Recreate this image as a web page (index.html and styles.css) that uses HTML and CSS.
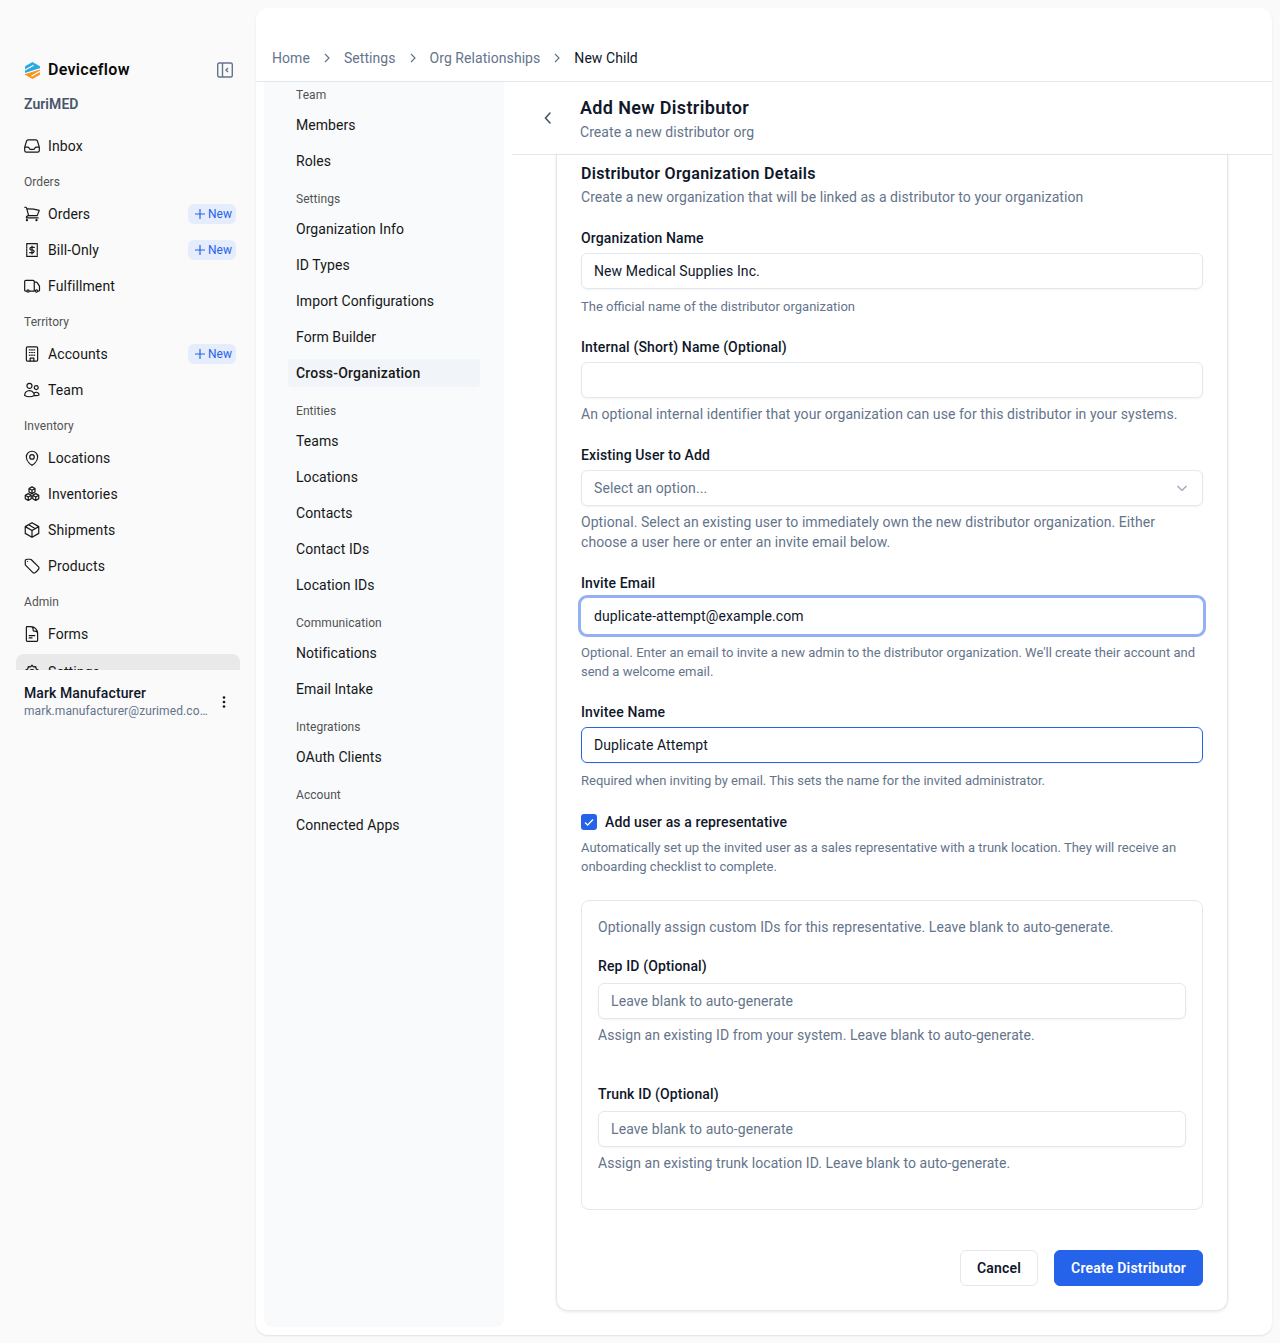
FILE: index.html

```html
<!DOCTYPE html>
<html lang="en">
<head>
    <meta charset="UTF-8">
    <title>Add New Distributor</title>
    <link rel="stylesheet" href="styles.css">
</head>
<body>
    <aside class="sidebar">
        <div class="brand">
            <svg class="logo" viewBox="1 0 14 16">
                <path d="M8 0 15 4v3.500L1 11V4z" fill="#29abe2"/>
                <path d="M15 6.500V12l-7 4-7-4V10.500z" fill="#f7941d"/>
                <path d="M1 7.600 9 3M1 10.800 15 6.400M7 13.400l8-4.600" stroke="#fff" stroke-width="1.100" fill="none"/>
            </svg>
            <span class="brand-name">Deviceflow</span>
            <svg class="collapse" viewBox="0 0 16 16" fill="none" stroke="#64748b" stroke-width="1.400">
                <rect x="0.700" y="1" width="14.600" height="14" rx="1.500"/>
                <path d="M5.500 1v14M11 6 9 8l2 2"/>
            </svg>
        </div>
        <div class="org-name">ZuriMED</div>
        <nav class="nav">
            <a class="nav-item"><svg class="ico" viewBox="0 0 24 24"><path d="M2.250 13.500h3.860a2.250 2.250 0 0 1 2.010 1.240l.26.52a2.250 2.250 0 0 0 2.010 1.240h3.220a2.250 2.250 0 0 0 2.010-1.240l.26-.52a2.250 2.250 0 0 1 2.010-1.240h3.860M2.250 13.900V18a2.250 2.250 0 0 0 2.250 2.250h15A2.250 2.250 0 0 0 21.750 18v-4.100a2.250 2.250 0 0 0-.1-.66L19.240 5.400a2.250 2.250 0 0 0-2.150-1.590H6.910A2.250 2.250 0 0 0 4.760 5.400L2.350 13.240a2.250 2.250 0 0 0-.1.66Z"/></svg>Inbox</a>
            <div class="nav-label">Orders</div>
            <a class="nav-item"><svg class="ico" viewBox="0 0 24 24"><path d="M2.250 3h1.390c.51 0 .95.34 1.090.83l.38 1.440M7.500 14.250a3 3 0 0 0-3 3h15.750m-12.750-3h11.220c1.120-2.300 2.100-4.680 2.920-7.130A60 60 0 0 0 5.110 5.270M7.500 14.250 5.110 5.270M6 20.250a.75.75 0 1 1-1.500 0 .75.75 0 0 1 1.500 0Zm12.750 0a.75.75 0 1 1-1.500 0 .75.75 0 0 1 1.500 0Z"/></svg>Orders<span class="new-tag"><svg viewBox="0 0 10 10"><path d="M5 0v10M0 5h10"/></svg>New</span></a>
            <a class="nav-item"><svg class="ico" viewBox="0 0 24 24"><path d="M5 3.500h14v17H5z" stroke-dasharray="2.200 1.100"/><path d="M15 8.500h-4a1.750 1.750 0 0 0 0 3.500h2a1.750 1.750 0 0 1 0 3.500H9M12 6.800v10.400"/></svg>Bill-Only<span class="new-tag"><svg viewBox="0 0 10 10"><path d="M5 0v10M0 5h10"/></svg>New</span></a>
            <a class="nav-item"><svg class="ico" viewBox="0 0 24 24"><path d="M8.250 18.750a1.500 1.500 0 0 1-3 0m3 0a1.500 1.500 0 0 0-3 0m3 0h6m-9 0H3.380A1.130 1.130 0 0 1 2.250 17.600V6a1.500 1.500 0 0 1 1.500-1.500h9.750A1.500 1.500 0 0 1 15 6v12.750m0 0h-.75m.75-12h2.600a1.500 1.500 0 0 1 1.250.67l2.900 4.400c.17.25.25.54.25.83v4.950c0 .62-.5 1.130-1.130 1.130H19.500m0 0a1.500 1.500 0 0 1-3 0m3 0a1.500 1.500 0 0 0-3 0"/></svg>Fulfillment</a>
            <div class="nav-label">Territory</div>
            <a class="nav-item"><svg class="ico" viewBox="0 0 24 24"><rect x="4.500" y="2.500" width="15" height="19" rx="1.500"/><path d="M9.500 21.500v-4h5v4M8.500 6.500h1M11.500 6.500h1M14.500 6.500h1M8.500 10h1M11.500 10h1M14.500 10h1M8.500 13.500h1M11.500 13.500h1M14.500 13.500h1"/></svg>Accounts<span class="new-tag"><svg viewBox="0 0 10 10"><path d="M5 0v10M0 5h10"/></svg>New</span></a>
            <a class="nav-item"><svg class="ico" viewBox="0 0 24 24"><path d="M15 19.130a9.400 9.400 0 0 0 2.630.37c1.330 0 2.600-.28 3.740-.78.03-1.960-1.550-3.720-3.750-3.720-1 0-1.920.37-2.600.98M15 19.130v-.01c0-1.110-.29-2.160-.78-3.070M15 19.240A12.300 12.300 0 0 1 8.630 21c-2.330 0-4.510-.64-6.370-1.760v-.12a6.380 6.380 0 0 1 11.960-3.070M12 6.380a3.380 3.380 0 1 1-6.750 0 3.380 3.380 0 0 1 6.750 0Zm8.250 2.250a2.630 2.630 0 1 1-5.250 0 2.630 2.630 0 0 1 5.250 0Z"/></svg>Team</a>
            <div class="nav-label">Inventory</div>
            <a class="nav-item"><svg class="ico" viewBox="0 0 24 24"><circle cx="12" cy="10.500" r="3"/><path d="M19.500 10.500c0 7.140-7.500 11.250-7.500 11.250S4.500 17.640 4.500 10.500a7.500 7.500 0 1 1 15 0Z"/></svg>Locations</a>
            <a class="nav-item"><svg class="ico" viewBox="0 0 24 24"><path d="m12 2.500 4 2.200v4.600l-4 2.200-4-2.200V4.700zM7 11.500l4 2.200v4.600l-4 2.200-4-2.200v-4.600zM17 11.500l4 2.200v4.600l-4 2.200-4-2.200v-4.600zM8 4.700l4 2.300 4-2.300M12 7v4.500M3 13.700l4 2.300 4-2.300M7 16v4.500M13 13.700l4 2.300 4-2.300M17 16v4.500"/></svg>Inventories</a>
            <a class="nav-item"><svg class="ico" viewBox="0 0 24 24"><path d="m21 7.500-9-5.250L3 7.500m18 0-9 5.250m9-5.250v9L12 21.750M3 7.500l9 5.250M3 7.500v9l9 5.250m0-9v9M7.500 5 16.500 10.200"/></svg>Shipments</a>
            <a class="nav-item"><svg class="ico" viewBox="0 0 24 24"><path d="M9.570 3H5.250A2.250 2.250 0 0 0 3 5.250v4.320c0 .6.24 1.170.66 1.600l9.580 9.580c.7.7 1.780.87 2.610.33a18.100 18.100 0 0 0 5.220-5.220c.54-.83.37-1.900-.33-2.600l-9.580-9.600A2.250 2.250 0 0 0 9.570 3Z"/><path d="M6 6h.01"/></svg>Products</a>
            <div class="nav-label">Admin</div>
            <a class="nav-item"><svg class="ico" viewBox="0 0 24 24"><path d="M19.500 14.250v-2.630a3.380 3.380 0 0 0-3.380-3.370h-1.500A1.130 1.130 0 0 1 13.500 7.130v-1.500A3.380 3.380 0 0 0 10.130 2.250H8.250m0 12h7.500m-7.500 3H12M10.500 2.250H5.630c-.62 0-1.130.5-1.130 1.130v17.250c0 .62.5 1.130 1.130 1.130h12.750c.62 0 1.130-.5 1.130-1.130V11.250a9 9 0 0 0-9-9Z"/></svg>Forms</a>
            <a class="nav-item nav-item-active"><svg class="ico" viewBox="0 0 24 24"><circle cx="12" cy="12" r="3.200"/><path d="m12 3 2 2.200 3-.3.6 3 2.600 1.600-1.300 2.500 1.300 2.500-2.600 1.600-.6 3-3-.3-2 2.200-2-2.200-3 .3-.6-3-2.600-1.600L5.100 12 3.800 9.500l2.600-1.600.6-3 3 .3z"/></svg>Settings</a>
        </nav>
        <div class="user">
            <div class="user-text">
                <div class="user-name">Mark Manufacturer</div>
                <div class="user-mail">mark.manufacturer@zurimed.com</div>
            </div>
            <svg class="dots" viewBox="0 0 16 16" fill="#0f172a"><circle cx="8" cy="3.500" r="1.300"/><circle cx="8" cy="8" r="1.300"/><circle cx="8" cy="12.500" r="1.300"/></svg>
        </div>
    </aside>

    <main class="main">
        <header class="crumbs">
            <a>Home</a>
            <svg class="crumb-sep" viewBox="0 0 16 16"><path d="m6 4 4 4-4 4"/></svg>
            <a>Settings</a>
            <svg class="crumb-sep" viewBox="0 0 16 16"><path d="m6 4 4 4-4 4"/></svg>
            <a>Org Relationships</a>
            <svg class="crumb-sep" viewBox="0 0 16 16"><path d="m6 4 4 4-4 4"/></svg>
            <span class="crumb-current">New Child</span>
        </header>

        <div class="main-body">
            <div class="subnav">
                <div class="subnav-label">Team</div>
                <a class="subnav-item">Members</a>
                <a class="subnav-item">Roles</a>
                <div class="subnav-label">Settings</div>
                <a class="subnav-item">Organization Info</a>
                <a class="subnav-item">ID Types</a>
                <a class="subnav-item">Import Configurations</a>
                <a class="subnav-item">Form Builder</a>
                <a class="subnav-item subnav-active">Cross-Organization</a>
                <div class="subnav-label">Entities</div>
                <a class="subnav-item">Teams</a>
                <a class="subnav-item">Locations</a>
                <a class="subnav-item">Contacts</a>
                <a class="subnav-item">Contact IDs</a>
                <a class="subnav-item">Location IDs</a>
                <div class="subnav-label">Communication</div>
                <a class="subnav-item">Notifications</a>
                <a class="subnav-item">Email Intake</a>
                <div class="subnav-label">Integrations</div>
                <a class="subnav-item">OAuth Clients</a>
                <div class="subnav-label">Account</div>
                <a class="subnav-item">Connected Apps</a>
            </div>

            <section class="content">
                <div class="page-head">
                    <svg class="back" viewBox="0 0 16 16"><path d="M10 3 5.500 8l4.500 5"/></svg>
                    <div>
                        <h1>Add New Distributor</h1>
                        <p>Create a new distributor org</p>
                    </div>
                </div>

                <div class="scroll">
                    <form class="card">
                        <h2>Distributor Organization Details</h2>
                        <p class="card-sub">Create a new organization that will be linked as a distributor to your organization</p>

                        <label class="lbl">Organization Name</label>
                        <div class="input">New Medical Supplies Inc.</div>
                        <p class="hint-sm">The official name of the distributor organization</p>

                        <label class="lbl">Internal (Short) Name (Optional)</label>
                        <div class="input"></div>
                        <p class="hint">An optional internal identifier that your organization can use for this distributor in your systems.</p>

                        <label class="lbl">Existing User to Add</label>
                        <div class="input input-select">
                            <span class="placeholder">Select an option...</span>
                            <svg class="select-arrow" viewBox="0 0 16 16"><path d="m3.500 6 4.500 4.500L12.500 6"/></svg>
                        </div>
                        <p class="hint">Optional. Select an existing user to immediately own the new distributor organization. Either choose a user here or enter an invite email below.</p>

                        <label class="lbl">Invite Email</label>
                        <div class="input input-focus">duplicate-attempt@example.com</div>
                        <p class="hint-sm hint-two">Optional. Enter an email to invite a new admin to the distributor organization. We'll create their account and send a welcome email.</p>

                        <label class="lbl">Invitee Name</label>
                        <div class="input input-filled">Duplicate Attempt</div>
                        <p class="hint-sm">Required when inviting by email. This sets the name for the invited administrator.</p>

                        <div class="check-row">
                            <span class="check"><svg viewBox="0 0 16 16"><path d="m4 8.500 2.700 2.500L12 5.500"/></svg></span>
                            <span class="check-label">Add user as a representative</span>
                        </div>
                        <p class="hint-sm hint-two check-hint">Automatically set up the invited user as a sales representative with a trunk location. They will receive an onboarding checklist to complete.</p>

                        <div class="panel">
                            <p class="panel-intro">Optionally assign custom IDs for this representative. Leave blank to auto-generate.</p>
                            <label class="lbl">Rep ID (Optional)</label>
                            <div class="input placeholder">Leave blank to auto-generate</div>
                            <p class="hint">Assign an existing ID from your system. Leave blank to auto-generate.</p>
                            <label class="lbl lbl-gap">Trunk ID (Optional)</label>
                            <div class="input placeholder">Leave blank to auto-generate</div>
                            <p class="hint">Assign an existing trunk location ID. Leave blank to auto-generate.</p>
                        </div>

                        <div class="actions">
                            <button type="button" class="btn">Cancel</button>
                            <button type="button" class="btn btn-primary">Create Distributor</button>
                        </div>
                    </form>
                </div>
            </section>
        </div>
    </main>
</body>
</html>
```

FILE: styles.css

```css
* {
    box-sizing: border-box;
}
html, body {
    height: 100%;
}
body {
    margin: 0;
    display: flex;
    background: #fafafa;
    color: #0f172a;
    font-family: "Roboto", "Noto Sans", sans-serif;
    font-size: 14px;
    line-height: 20px;
    letter-spacing: 0.06px;
    overflow: hidden;
}
p, h1, h2 {
    margin: 0;
}

/* left sidebar */
.sidebar {
    width: 256px;
    flex: none;
    display: flex;
    flex-direction: column;
    align-items: stretch;
    padding-top: 58px;
}
.brand {
    display: flex;
    align-items: center;
    height: 24px;
    padding: 0 23px 0 24px;
}
.logo {
    width: 15px;
    height: 17px;
    margin: 0 8px 0 1px;
}
.brand-name {
    flex: 1;
    font-size: 16px;
    font-weight: 600;
    letter-spacing: 0.3px;
    color: #0a0a0a;
}
.collapse {
    width: 16px;
    height: 16px;
}
.org-name {
    margin: 12px 0 0 24px;
    font-weight: 600;
    color: #475569;
}
.nav {
    height: 542px;
    margin-top: 14px;
    padding: 0 16px;
    overflow: hidden;
    flex: none;
}
.nav-item {
    display: flex;
    align-items: center;
    height: 36px;
    padding: 0 4px 0 8px;
    border-radius: 8px;
    letter-spacing: 0.1px;
    color: #171717;
}
.nav-item-active {
    background: #e9e9e9;
    margin-top: 2px;
}
.ico {
    width: 18px;
    height: 18px;
    margin: 0 7px 0 -1px;
    flex: none;
    fill: none;
    stroke: #171717;
    stroke-width: 1.6;
    stroke-linecap: round;
    stroke-linejoin: round;
}
.nav-label {
    height: 32px;
    padding: 8px 0 0 8px;
    font-size: 12px;
    line-height: 20px;
    color: #525252;
}
.new-tag {
    margin-left: auto;
    display: flex;
    align-items: center;
    gap: 3px;
    height: 20px;
    padding: 0 4px 0 7px;
    border-radius: 6px;
    background: #e5ecfb;
    color: #2563eb;
    font-size: 12px;
    letter-spacing: 0;
}
.new-tag svg {
    width: 10px;
    height: 10px;
    stroke: #2563eb;
    stroke-width: 1.2;
}
.user {
    display: flex;
    align-items: center;
    padding: 13px 24px 0;
}
.user-text {
    width: 184px;
}
.user-name {
    font-weight: 500;
    letter-spacing: 0.1px;
}
.user-mail {
    font-size: 12px;
    line-height: 16px;
    letter-spacing: 0.1px;
    color: #64748b;
    white-space: nowrap;
    overflow: hidden;
    text-overflow: ellipsis;
}
.dots {
    width: 16px;
    height: 16px;
    margin: 2px 0 0 8px;
}

/* main panel */
.main {
    width: 1016px;
    height: 1327px;
    margin: 8px 0;
    display: flex;
    flex-direction: column;
    background: #fff;
    border-radius: 12px;
    box-shadow: 0 1px 2px rgba(15, 23, 42, 0.1);
    overflow: hidden;
}
.crumbs {
    height: 74px;
    flex: none;
    display: flex;
    align-items: center;
    gap: 9px;
    padding: 26px 16px 0;
    border-bottom: 1px solid #e2e8f0;
    color: #64748b;
}
.crumb-sep {
    width: 16px;
    height: 16px;
    fill: none;
    stroke: #64748b;
    stroke-width: 1.2;
}
.crumb-current {
    color: #0f172a;
}
.main-body {
    flex: 1;
    display: flex;
    min-height: 0;
    padding: 0 0 8px 8px;
}

/* settings column */
.subnav {
    width: 240px;
    flex: none;
    padding: 0 24px;
    background: #f8fafc;
    border-radius: 0 0 8px 8px;
}
.subnav-label {
    height: 24px;
    margin: 12px 0 4px;
    padding-left: 8px;
    font-size: 12px;
    line-height: 24px;
    color: #525252;
}
.subnav-label:first-child {
    margin-top: 1px;
}
.subnav-item {
    display: block;
    width: 192px;
    height: 28px;
    margin-bottom: 8px;
    padding: 4px 8px;
    border-radius: 4px;
    color: #171717;
}
.subnav-item:has(+ .subnav-label) {
    margin-bottom: 0;
}
.subnav-active {
    background: #f1f5f9;
    font-weight: 500;
    letter-spacing: 0.2px;
}

/* form area */
.content {
    flex: 1;
    min-width: 0;
    margin-left: 8px;
    display: flex;
    flex-direction: column;
}
.page-head {
    height: 73px;
    flex: none;
    display: flex;
    align-items: center;
    padding-left: 28px;
    border-bottom: 1px solid #e2e8f0;
}
.back {
    width: 16px;
    height: 16px;
    margin-right: 24px;
    fill: none;
    stroke: #475569;
    stroke-width: 1.6;
    stroke-linecap: round;
}
.page-head h1 {
    font-size: 18px;
    line-height: 28px;
    font-weight: 600;
    letter-spacing: 0.35px;
}
.page-head p {
    color: #64748b;
}
.scroll {
    flex: 1;
    min-height: 0;
    padding: 0 44px 16px;
}
.card {
    height: 100%;
    padding: 7px 24px 24px;
    border: 1px solid #e2e8f0;
    border-top: 0;
    border-radius: 0 0 12px 12px;
    box-shadow: 0 1px 3px rgba(15, 23, 42, 0.1);
}
.card h2 {
    font-size: 16px;
    line-height: 24px;
    font-weight: 600;
    letter-spacing: 0.3px;
}
.card-sub {
    margin-top: 1px;
    color: #64748b;
}
.lbl {
    display: block;
    margin: 21px 0 5px;
    font-weight: 500;
    letter-spacing: 0.13px;
}
.input {
    display: flex;
    align-items: center;
    justify-content: space-between;
    height: 36px;
    padding: 0 12px;
    letter-spacing: 0.1px;
    background: #fff;
    border: 1px solid #e2e8f0;
    border-radius: 6px;
    box-shadow: 0 1px 2px rgba(15, 23, 42, 0.05);
}
.input-focus {
    border: 1px solid #fff;
    box-shadow: 0 0 0 3px #93b1f3;
}
.input-filled {
    border-color: #2563eb;
}
.placeholder {
    color: #64748b;
}
.select-arrow {
    width: 16px;
    height: 16px;
    fill: none;
    stroke: #94a3b8;
    stroke-width: 1.2;
}
.hint {
    margin-top: 6px;
    color: #64748b;
}
.hint-sm {
    margin-top: 8px;
    font-size: 13px;
    line-height: 20px;
    letter-spacing: 0;
    color: #64748b;
}
.hint-two {
    line-height: 19px;
    padding-bottom: 1px;
}
.input-focus + .hint-sm {
    margin-top: 9px;
}
.hint-sm + .lbl {
    margin-top: 20px;
}
.check-row {
    display: flex;
    align-items: center;
    gap: 8px;
    margin-top: 21px;
}
.check {
    width: 16px;
    height: 16px;
    border-radius: 3px;
    background: #2563eb;
}
.check svg {
    display: block;
    fill: none;
    stroke: #fff;
    stroke-width: 1.3;
}
.check-label {
    font-weight: 500;
    letter-spacing: 0.13px;
}
.check-hint {
    margin-top: 6px;
}
.panel {
    margin-top: 23px;
    height: 310px;
    padding: 16px;
    border: 1px solid #e2e8f0;
    border-radius: 8px;
}
.panel-intro {
    color: #64748b;
}
.panel .lbl {
    margin: 19px 0 7px;
}
.panel .lbl-gap {
    margin-top: 39px;
}
.actions {
    display: flex;
    justify-content: flex-end;
    gap: 16px;
    margin-top: 40px;
}
.btn {
    height: 36px;
    padding: 0 16px;
    font: inherit;
    font-weight: 600;
    letter-spacing: 0.2px;
    background: #fff;
    color: #0f172a;
    border: 1px solid #e2e8f0;
    border-radius: 6px;
}
.btn-primary {
    background: #2563eb;
    border-color: #2563eb;
    color: #fff;
}
```
